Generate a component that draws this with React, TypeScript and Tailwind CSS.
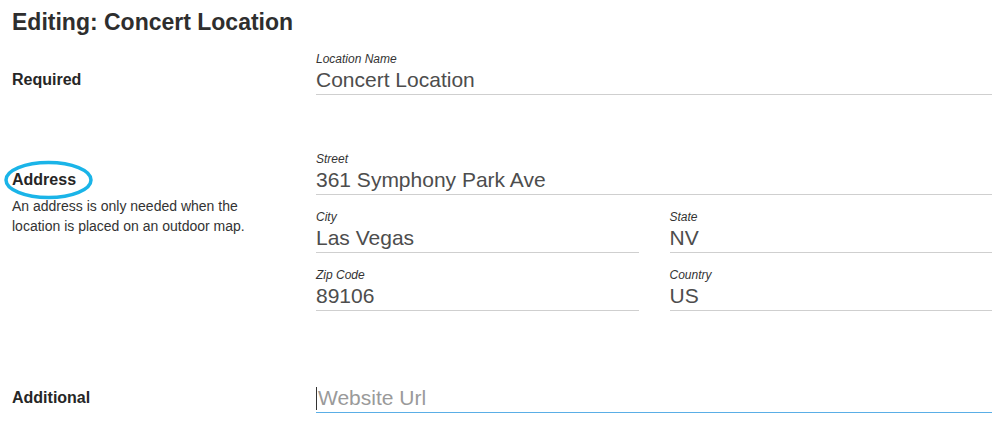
import type { ReactNode } from "react";

interface FieldProps {
  label?: string;
  value?: string;
  placeholder?: string;
  focused?: boolean;
}

function Field({ label, value, placeholder, focused }: FieldProps) {
  return (
    <div className="flex flex-col">
      <div className="h-[14px] text-[12px] leading-[14px] italic text-[#333]">{label}</div>
      <div
        className={
          focused
            ? "h-[29px] border-b border-[#5aaee6] text-[21px] leading-[28px] text-[#9a9a9a] flex items-center"
            : "h-[29px] border-b border-[#cfcfcf] text-[21px] leading-[28px] text-[#4d4d4d]"
        }
      >
        {focused && <span className="w-px h-[23px] bg-[#333] mr-px" />}
        {value ?? placeholder}
      </div>
    </div>
  );
}

interface SectionProps {
  title: string;
  circled?: boolean;
  note?: string[];
  className?: string;
  children: ReactNode;
}

function Section({ title, circled, note, className, children }: SectionProps) {
  return (
    <div className={"flex " + (className ?? "")}>
      <div className="w-[304px] shrink-0 pt-[14px]">
        <div className="relative h-[28px] text-[16px] leading-[28px] font-bold text-[#262626]">
          {circled && (
            <svg
              className="absolute left-[-9px] top-[-8px]"
              width="92"
              height="44"
              viewBox="0 0 92 44"
              fill="none"
            >
              <ellipse cx="45.5" cy="22" rx="42.5" ry="17.5" stroke="#1ab4e8" strokeWidth="3.5" />
            </svg>
          )}
          <span className="relative">{title}</span>
        </div>
        {note && (
          <div className="mt-[2px] text-[14px] leading-[20px] text-[#333]">
            {note.map((n) => (
              <div key={n}>{n}</div>
            ))}
          </div>
        )}
      </div>
      <div className="flex-1 flex flex-col gap-[15px]">{children}</div>
    </div>
  );
}

export default function App() {
  return (
    <div
      className="w-[1006px] h-[438px] bg-white pl-3 pr-[14px] overflow-hidden"
      style={{ fontFamily: '"Liberation Sans", Arial, sans-serif' }}
    >
      <h1 className="pt-[10px] h-[52px] text-[23px] leading-[24px] font-bold text-[#2e2e2e]">
        Editing: Concert Location
      </h1>
      <div className="flex flex-col">
        <Section title="Required">
          <Field label="Location Name" value="Concert Location" />
        </Section>
        <Section
          title="Address"
          circled
          className="mt-[57px]"
          note={["An address is only needed when the", "location is placed on an outdoor map."]}
        >
          <Field label="Street" value="361 Symphony Park Ave" />
          <div className="grid grid-cols-2 gap-x-[31px] gap-y-[15px]">
            <Field label="City" value="Las Vegas" />
            <Field label="State" value="NV" />
            <Field label="Zip Code" value="89106" />
            <Field label="Country" value="US" />
          </div>
        </Section>
        <Section title="Additional" className="mt-[59px]">
          <Field placeholder="Website Url" focused />
        </Section>
      </div>
    </div>
  );
}
